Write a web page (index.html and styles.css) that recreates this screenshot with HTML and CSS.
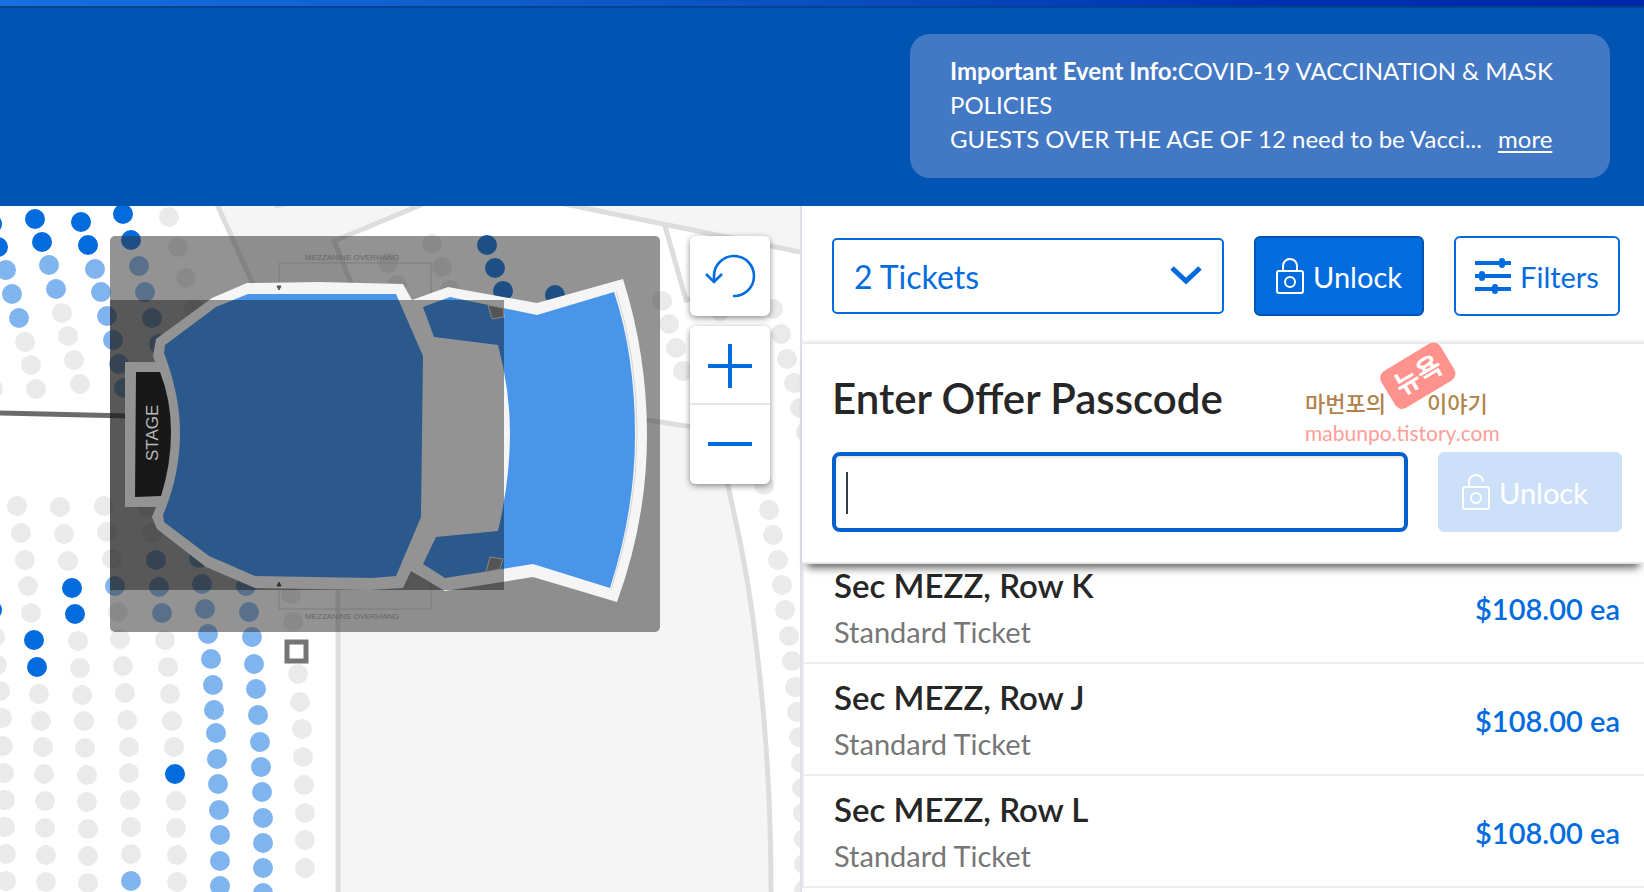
FILE: index.html
```html
<!DOCTYPE html>
<html lang="en">
<head>
<meta charset="utf-8">
<meta name="viewport" content="width=device-width, initial-scale=1">
<title>Select Tickets</title>
<link rel="stylesheet" href="styles.css">
</head>
<body>
<div class="page">
  <header class="header">
    <section class="notice">
      <strong>Important Event Info:</strong>COVID-19 VACCINATION &amp; MASK POLICIES<br>GUESTS OVER THE AGE OF 12 need to be Vacci...
      <a class="notice-more" href="#info">more</a>
    </section>
  </header>

  <main class="content">
    <section class="map" aria-label="Seat map">
      <svg class="map-canvas" viewBox="0 206 800 686" preserveAspectRatio="xMinYMin slice">
        <!-- floor areas -->
        <g class="floor">
          <path d="M217 206L253 284H352L334 241L423 204H217z"/>
          <path d="M573 206L800 252V206z"/>
          <path d="M338 892V420H648L690 427L714 440Q740 520 757 660Q771 770 771 892z"/>
        </g>
        <path class="wall" d="M216 202L260 300M358 300L334 241L423 204M560 203L800 252M665 226L686 300L692 299M640 419L700 428Q722 450 731 500Q749 575 758 660Q771 770 771 892M338 560V892M275 206L292 202"/>
        <path class="aisle" d="M0 413L130 416"/>
        <!-- seats -->
        <path class="seat seat-taken" d="M25 342h0M31 365h0M36 389h0M-7 389h0M62 313h0M68 336h0M74 360h0M80 384h0M169 217h0M178 247h0M186 278h0M194 309h0M432 244h0M442 267h0M450 290h0M388 263h0M397 285h0M662 301h0M669 324h0M676 348h0M683 371h0M720 311h0M773 309h0M781 334h0M787 359h0M794 383h0M800 408h0M806 432h0M764 485h0M769 510h0M773 535h0M778 560h0M782 585h0M785 610h0M789 636h0M792 661h0M795 687h0M797 712h0M799 737h0M801 763h0M802 788h0M803 813h0M804 839h0M804 864h0M804 890h0"/>
        <path class="seat seat-taken" d="M17 506h0M21 533h0M25 560h0M28 586h0M31 613h0M39 694h0M41 721h0M43 747h0M44 774h0M45 801h0M45 828h0M46 855h0M46 882h0M60 507h0M64 534h0M68 561h0M78 641h0M80 668h0M82 695h0M84 721h0M85 748h0M87 775h0M87 802h0M88 829h0M88 856h0M88 883h0M104 506h0M107 532h0M112 559h0M118 612h0M120 639h0M123 666h0M125 693h0M127 720h0M129 747h0M129 773h0M130 800h0M131 827h0M131 854h0M147 507h0M152 533h0M165 640h0M168 667h0M170 694h0M172 721h0M174 747h0M176 801h0M176 828h0M177 855h0M177 882h0M291 594h0M293 622h0M298 674h0M300 702h0M302 729h0M303 757h0M304 785h0M305 813h0M305 840h0M305 868h0M-5 637h0M-3 665h0M0 691h0M2 718h0M3 746h0M4 773h0M5 800h0M5 827h0M6 854h0M6 881h0"/>
        <path class="seat seat-resale" d="M6 270h0M12 294h0M19 318h0M49 265h0M56 289h0M95 269h0M101 292h0M107 316h0M113 340h0M119 364h0M124 388h0M139 266h0M145 292h0M152 318h0M159 344h0M115 586h0M131 881h0M156 560h0M159 587h0M162 613h0M199 558h0M202 584h0M205 609h0M208 634h0M211 659h0M213 685h0M214 710h0M216 733h0M217 759h0M218 784h0M219 810h0M220 835h0M220 861h0M220 886h0M246 586h0M249 612h0M252 637h0M254 664h0M256 689h0M258 715h0M260 742h0M261 767h0M262 792h0M263 818h0M263 843h0M263 868h0M263 893h0"/>
        <path class="seat seat-open" d="M-8 224h0M-2 247h0M35 219h0M42 242h0M81 222h0M88 245h0M123 214h0M131 240h0M487 245h0M495 268h0M503 291h0M555 295h0M-8 610h0M34 640h0M37 667h0M72 588h0M75 614h0M175 774h0"/>
        <rect class="marker" x="287" y="642" width="19" height="19"/>
        <!-- overview -->
        <rect class="mini-bg" x="110" y="236" width="550" height="396" rx="5"/>
        <path class="mini-line" d="M279 286V263H431V300M279 585V609H431V577"/>
        <text class="mini-label" x="305" y="260">MEZZANINE OVERHANG</text>
        <text class="mini-label" x="305" y="619">MEZZANINE OVERHANG</text>
        <path class="mini-edge" d="M247 283L320 282L403 284L412 300L448 287L537 303L623 279Q647 355 647 435Q647 520 617 602L533 577L445 591L411 571L403 588L370 590L255 588L206 567L157 529L152 517L156 507H125V362H155L153 356L156 339L212 298z"/>
        <path class="mini-section" d="M248 294H396L423 356L421 517L396 576L372 578L255 576L209 556L164 522L163 515Q180 475 180 433Q180 395 164 353L165 345L216 307z"/>
        <path class="mini-section" d="M423 307L450 297L537 315L614 292Q635 355 635 435Q635 510 610 588L533 564L445 578L423 564L436 537L498 531Q510 480 510 433Q510 390 498 345L434 337z"/>
        <path class="mini-trace" d="M616 291Q637 355 637 435Q637 510 611 590"/>
        <path class="mini-booth" d="M488 305L492 319L504 317L503 308zM490 557L503 559L500 569L486 572z"/>
        <path class="mini-stage" d="M136 372H160Q171 400 171 432Q171 465 161 496L135 497z"/>
        <path class="mini-arrow" d="M277 286H281L279 290zM277 586H281L279 582z"/>
        <rect class="mini-view" x="110" y="300" width="394" height="290"/>
        <text class="mini-stage-label" transform="translate(158 461) rotate(-90)">STAGE</text>
      </svg>

      <div class="controls">
        <button class="control" type="button" aria-label="Reset map">
          <svg viewBox="0 0 80 80"><path class="stroke-thin" d="M24 45V40A20 20 0 1 1 43 60M16 38L24 46L32 38"/></svg>
        </button>
        <div class="zoom-group">
          <button class="control-half zoom-in" type="button" aria-label="Zoom in">
            <svg viewBox="0 0 80 80"><path class="stroke-thick" d="M18 40H62M40 18V62"/></svg>
          </button>
          <button class="control-half zoom-out" type="button" aria-label="Zoom out">
            <svg viewBox="0 0 80 80"><path class="stroke-thick" d="M18 39H62"/></svg>
          </button>
        </div>
      </div>
    </section>

    <aside class="sidebar">
      <div class="toolbar">
        <div class="quantity">
          <select class="quantity-select" aria-label="Number of tickets">
            <option>1 Ticket</option>
            <option selected>2 Tickets</option>
          </select>
          <svg class="chevron" viewBox="0 0 32 20"><path d="M2 2L16 15L30 2"/></svg>
        </div>
        <button class="btn btn-primary" type="button">
          <svg class="lock" viewBox="0 0 28 36"><rect x="1" y="13" width="26" height="22" rx="2"/><path d="M7 13V8A7 7 0 0 1 21 8V13"/><circle cx="14" cy="24" r="5"/></svg>
          Unlock
        </button>
        <button class="btn btn-outline" type="button">
          <svg class="sliders" viewBox="0 0 36 36"><path d="M0 5H36M0 18H36M0 31H36"/><g><rect x="24" y="0" width="6" height="10" rx="3"/><rect x="4" y="13" width="6" height="10" rx="3"/><rect x="17" y="26" width="6" height="10" rx="3"/></g></svg>
          Filters
        </button>
      </div>

      <form class="passcode">
        <label class="passcode-title" for="passcode">Enter Offer Passcode</label>
        <div class="passcode-row">
          <div class="passcode-field">
            <input class="passcode-input" id="passcode" type="text" autocomplete="off">
            <span class="caret"></span>
          </div>
          <button class="btn btn-disabled" type="submit" disabled>
            <svg class="lock" viewBox="0 0 28 36"><rect x="1" y="13" width="26" height="22" rx="2"/><path d="M7 13V8A7 7 0 0 1 21 8"/><circle cx="14" cy="24" r="5"/></svg>
            Unlock
          </button>
        </div>
        <svg class="blog-mark" viewBox="0 0 200 105">
          <text class="blog-ko" x="3" y="70">마번포의</text>
          <text class="blog-ko" x="125" y="70">이야기</text>
          <g transform="rotate(-31 116 33)">
            <rect class="blog-tag" x="81" y="12" width="69" height="43" rx="8"/>
            <text class="blog-tag-text" x="116" y="43">뉴욕</text>
          </g>
          <text class="blog-url" x="3" y="99">mabunpo.tistory.com</text>
        </svg>
      </form>

      <ul class="offers">
        <li class="offer">
          <div><h3 class="offer-name">Sec MEZZ, Row K</h3><p class="offer-type">Standard Ticket</p></div>
          <span class="offer-price">$108.00 ea</span>
        </li>
        <li class="offer">
          <div><h3 class="offer-name">Sec MEZZ, Row J</h3><p class="offer-type">Standard Ticket</p></div>
          <span class="offer-price">$108.00 ea</span>
        </li>
        <li class="offer">
          <div><h3 class="offer-name">Sec MEZZ, Row L</h3><p class="offer-type">Standard Ticket</p></div>
          <span class="offer-price">$108.00 ea</span>
        </li>
      </ul>
    </aside>
  </main>
</div>
</body>
</html>
```
FILE: styles.css
```css
* { box-sizing: border-box; }

body {
  margin: 0;
  font-family: Lato, "Liberation Sans", sans-serif;
  color: #262626;
  background: #fff;
}

.page {
  display: flex;
  flex-direction: column;
  height: 100vh;
  overflow: hidden;
}

.header {
  position: relative;
  display: flex;
  justify-content: flex-end;
  padding: 34px 34px 28px;
  background: #0055b3;
}

.header::before {
  content: "";
  position: absolute;
  inset: 0 0 auto;
  height: 6px;
  background: linear-gradient(90deg, #1570e0, #0a4fc0 50%, #0030b0 78%, #0027a8);
  border-bottom: 2px solid #00438f;
}

.notice {
  width: 700px;
  max-width: 100%;
  padding: 20px 40px 22px;
  border-radius: 20px;
  background: #4378c4;
  color: #fff;
  font-size: 24px;
  line-height: 34px;
}

.notice strong { font-weight: 700; }

.notice-more {
  margin-left: 10px;
  color: #fff;
  text-underline-offset: 3px;
}

.content {
  flex: 1;
  min-height: 0;
  display: grid;
  grid-template-columns: 800fr 844fr;
}

.map {
  position: relative;
  min-width: 0;
  overflow: hidden;
  background: #fff;
}

.map-canvas { display: block; width: 100%; height: 100%; }

.floor { fill: #f5f5f5; }
.wall { fill: none; stroke: #ddd; stroke-width: 5; }
.aisle { fill: none; stroke: #6b6b6b; stroke-width: 5; }
.seat { fill: none; stroke-width: 20; stroke-linecap: round; }
.seat-taken { stroke: #eaeaea; }
.seat-resale { stroke: #80b4ee; }
.seat-open { stroke: #026cdf; }
.marker { fill: #fff; stroke: #757575; stroke-width: 5; }

.mini-bg { fill: #383838; fill-opacity: .54; }
.mini-line { fill: none; stroke: #7c7c7c; }
.mini-label { font: 8px "Liberation Sans", sans-serif; fill: #666; }
.mini-edge { fill: #f5f5f5; }
.mini-section { fill: #4895e9; }
.mini-trace { fill: none; stroke: #d5d5d5; }
.mini-booth { fill: #8c8c8c; stroke: #e0e0e0; }
.mini-stage { fill: #282828; }
.mini-arrow { fill: #555; stroke: #555; }
.mini-view { fill: #000; fill-opacity: .4; }
.mini-stage-label { font: 17px "Liberation Sans", sans-serif; fill: #b8b8b8; }

.controls {
  position: absolute;
  top: 30px;
  right: 30px;
  display: flex;
  flex-direction: column;
  gap: 10px;
  width: 80px;
}

.control,
.control-half {
  display: block;
  width: 80px;
  padding: 0;
  border: 0;
  background: #fff;
}

.control,
.zoom-group {
  border-radius: 6px;
  box-shadow: 0 2px 6px rgba(0, 0, 0, .45);
}

.control { height: 80px; }
.zoom-group { overflow: hidden; background: #fff; }
.zoom-in { height: 77px; }
.zoom-out { height: 81px; border-top: 2px solid #e6e6e6; }
.controls svg { display: block; width: 80px; height: 80px; fill: none; stroke: #026cdf; }
.stroke-thin { stroke-width: 2.6; }
.stroke-thick { stroke-width: 4; }

.sidebar {
  display: flex;
  flex-direction: column;
  min-width: 0;
  border-left: 2px solid #dfe1e8;
  background: #fff;
}

.toolbar {
  display: flex;
  align-items: center;
  gap: 30px;
  padding: 30px 24px 26px 30px;
  border-bottom: 2px solid #ebebeb;
  box-shadow: inset 0 -3px 3px -2px rgba(0, 0, 0, .08);
}

.quantity { position: relative; flex: 1; min-width: 0; }

.quantity-select {
  appearance: none;
  display: block;
  width: 100%;
  height: 76px;
  padding: 0 20px;
  border: 2px solid #026cdf;
  border-radius: 5px;
  background: #fff;
  color: #026cdf;
  font: 400 32px Lato, sans-serif;
}

.chevron {
  position: absolute;
  top: 28px;
  right: 22px;
  width: 32px;
  height: 20px;
  fill: none;
  stroke: #026cdf;
  stroke-width: 5;
  pointer-events: none;
}

.btn {
  display: flex;
  align-items: center;
  justify-content: center;
  gap: 9px;
  height: 80px;
  padding: 0;
  border: 2px solid #026cdf;
  border-radius: 6px;
  font: 400 29px Lato, sans-serif;
}

.btn-primary { width: 170px; border-color: #0055b3; background: #026cdf; color: #fff; }
.btn-outline { width: 166px; background: #fff; color: #026cdf; }
.btn-disabled {
  justify-content: flex-start;
  width: 184px;
  padding-left: 22px;
  border-color: #cce1f9;
  background: #cce1f9;
  color: #fff;
}

.lock { width: 28px; height: 36px; fill: none; stroke: currentColor; stroke-width: 2; }
.sliders { width: 36px; height: 36px; stroke: currentColor; stroke-width: 4; }
.sliders g { fill: currentColor; stroke: none; }

.passcode {
  position: relative;
  z-index: 1;
  padding: 29px 22px 30px 30px;
  border-bottom: 2px solid #e6e6e6;
  background: #fff;
  box-shadow: 0 9px 8px -5px rgba(0, 0, 0, .6);
}

.passcode-title {
  display: block;
  padding-bottom: 29px;
  font-size: 42px;
  font-weight: 600;
  line-height: 50px;
}

.passcode-row { display: flex; gap: 30px; }
.passcode-field { position: relative; flex: 1; min-width: 0; }

.passcode-input {
  display: block;
  width: 100%;
  height: 80px;
  padding: 0 10px;
  border: 4px solid #0061cc;
  border-radius: 8px;
  background: #fff;
  box-shadow: inset 0 2px 3px rgba(0, 0, 0, .1);
  font: 400 29px Lato, sans-serif;
}

.caret {
  position: absolute;
  top: 20px;
  left: 14px;
  width: 2px;
  height: 42px;
  background: #333d47;
}

.blog-mark { position: absolute; top: -2px; right: 142px; width: 200px; height: 105px; overflow: visible; }
.blog-ko { font: 500 22px "Noto Sans CJK KR", sans-serif; fill: #b0834a; }
.blog-tag { fill: #ff928d; }
.blog-tag-text { font: 700 27px "Noto Sans CJK KR", sans-serif; fill: #fff; text-anchor: middle; }
.blog-url { font: 400 21px Lato, sans-serif; fill: #ff9d97; }

.offers {
  margin: -12px 0 0;
  padding: 0;
  border-left: 2px solid #ebeced;
  list-style: none;
}

.offer {
  display: flex;
  align-items: center;
  justify-content: space-between;
  height: 112px;
  padding: 2px 24px 0 30px;
  border-bottom: 2px solid #ebeced;
}

.offer-name { margin: 0; font-size: 33px; font-weight: 600; line-height: 46px; }
.offer-type { margin: 0; color: #767676; font-size: 29px; line-height: 47px; }
.offer-price { color: #026cdf; font-size: 29px; font-weight: 600; }
```
